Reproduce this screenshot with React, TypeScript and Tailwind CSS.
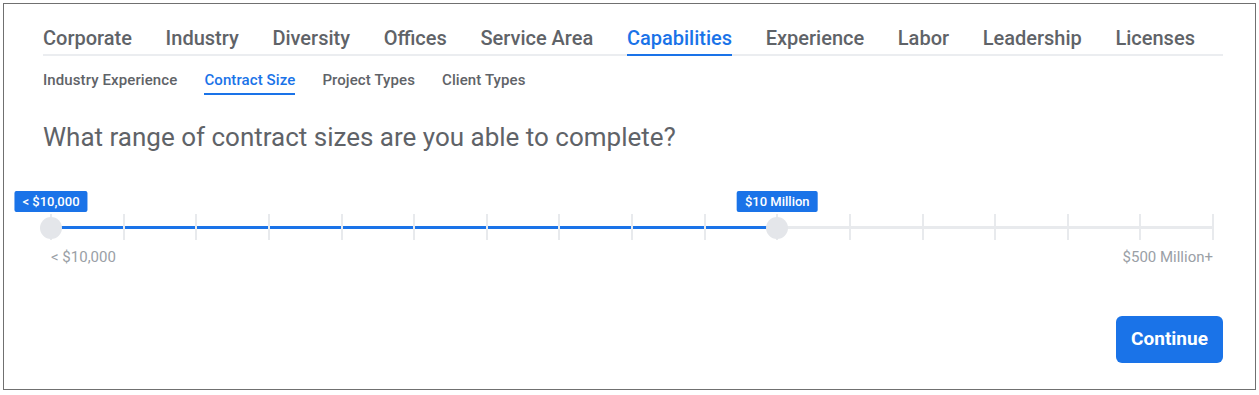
import React from "react";

const mainTabs = [
  "Corporate",
  "Industry",
  "Diversity",
  "Offices",
  "Service Area",
  "Capabilities",
  "Experience",
  "Labor",
  "Leadership",
  "Licenses",
];

const subTabs = ["Industry Experience", "Contract Size", "Project Types", "Client Types"];

const TICKS = 17;
const LOW = 0;
const HIGH = 10;

export default function App() {
  const pct = (i: number) => (i / (TICKS - 1)) * 100;

  return (
    <div className="bg-white p-[3px]" style={{ fontFamily: "Roboto, 'Liberation Sans', sans-serif" }}>
      <div className="h-[387px] w-[1253px] border border-[#707070] bg-white pl-[39px] pt-[22px]">
        <div className="w-[1180px]">
          {/* main tabs */}
          <div className="flex justify-between border-b-2 border-[#ebedf0] pr-[28px]">
            {mainTabs.map((t) => (
              <div
                key={t}
                className={
                  "-mb-[2px] border-b-2 pb-[4px] text-[20px] font-medium leading-[24px] " +
                  (t === "Capabilities"
                    ? "border-[#1a73e8] text-[#1a73e8]"
                    : "border-transparent text-[#5f6368]")
                }
              >
                {t}
              </div>
            ))}
          </div>

          {/* sub tabs */}
          <div className="mt-[14px] flex gap-[27px]">
            {subTabs.map((t) => (
              <div
                key={t}
                className={
                  "border-b-2 pb-[3px] text-[15px] font-medium leading-[20px] tracking-[0.1px] " +
                  (t === "Contract Size"
                    ? "border-[#1a73e8] text-[#1a73e8]"
                    : "border-transparent text-[#5f6368]")
                }
              >
                {t}
              </div>
            ))}
          </div>

          <h1 className="mt-[26px] text-[26px] font-normal leading-[32px] text-[#5f6368]">
            What range of contract sizes are you able to complete?
          </h1>

          {/* slider */}
          <div className="ml-[8px] mt-[34px] w-[1162px]">
            <div className="relative h-[56px]">
              <div className="absolute left-0 right-0 top-[39px] h-[3px] bg-[#e8eaed]" />
              <div
                className="absolute top-[39px] h-[3px] bg-[#1a73e8]"
                style={{ left: `${pct(LOW)}%`, width: `${pct(HIGH) - pct(LOW)}%` }}
              />
              {Array.from({ length: TICKS }).map((_, i) => (
                <div
                  key={i}
                  className="absolute top-[27px] h-[26px] w-[2px] -translate-x-1/2 bg-[#e8eaed]"
                  style={{ left: `${pct(i)}%` }}
                />
              ))}
              {[
                { i: LOW, label: "< $10,000" },
                { i: HIGH, label: "$10 Million" },
              ].map(({ i, label }) => (
                <React.Fragment key={label}>
                  <div
                    className="absolute top-[4px] -translate-x-1/2 whitespace-nowrap rounded-[2px] bg-[#1a73e8] px-[8px] text-[13px] font-medium leading-[21px] text-white"
                    style={{ left: `${pct(i)}%` }}
                  >
                    {label}
                  </div>
                  <div
                    className="absolute top-[30px] h-[22px] w-[22px] -translate-x-1/2 rounded-full bg-[#e4e6ea]"
                    style={{ left: `${pct(i)}%` }}
                  />
                </React.Fragment>
              ))}
            </div>
            <div className="mt-[5px] flex justify-between text-[15px] leading-[18px] text-[#9aa0a6]">
              <span>&lt; $10,000</span>
              <span>$500 Million+</span>
            </div>
          </div>

          <div className="mt-[50px] flex justify-end">
            <button className="h-[47px] w-[107px] rounded-[6px] bg-[#1a73e8] text-[19px] font-bold text-white">
              Continue
            </button>
          </div>
        </div>
      </div>
    </div>
  );
}
